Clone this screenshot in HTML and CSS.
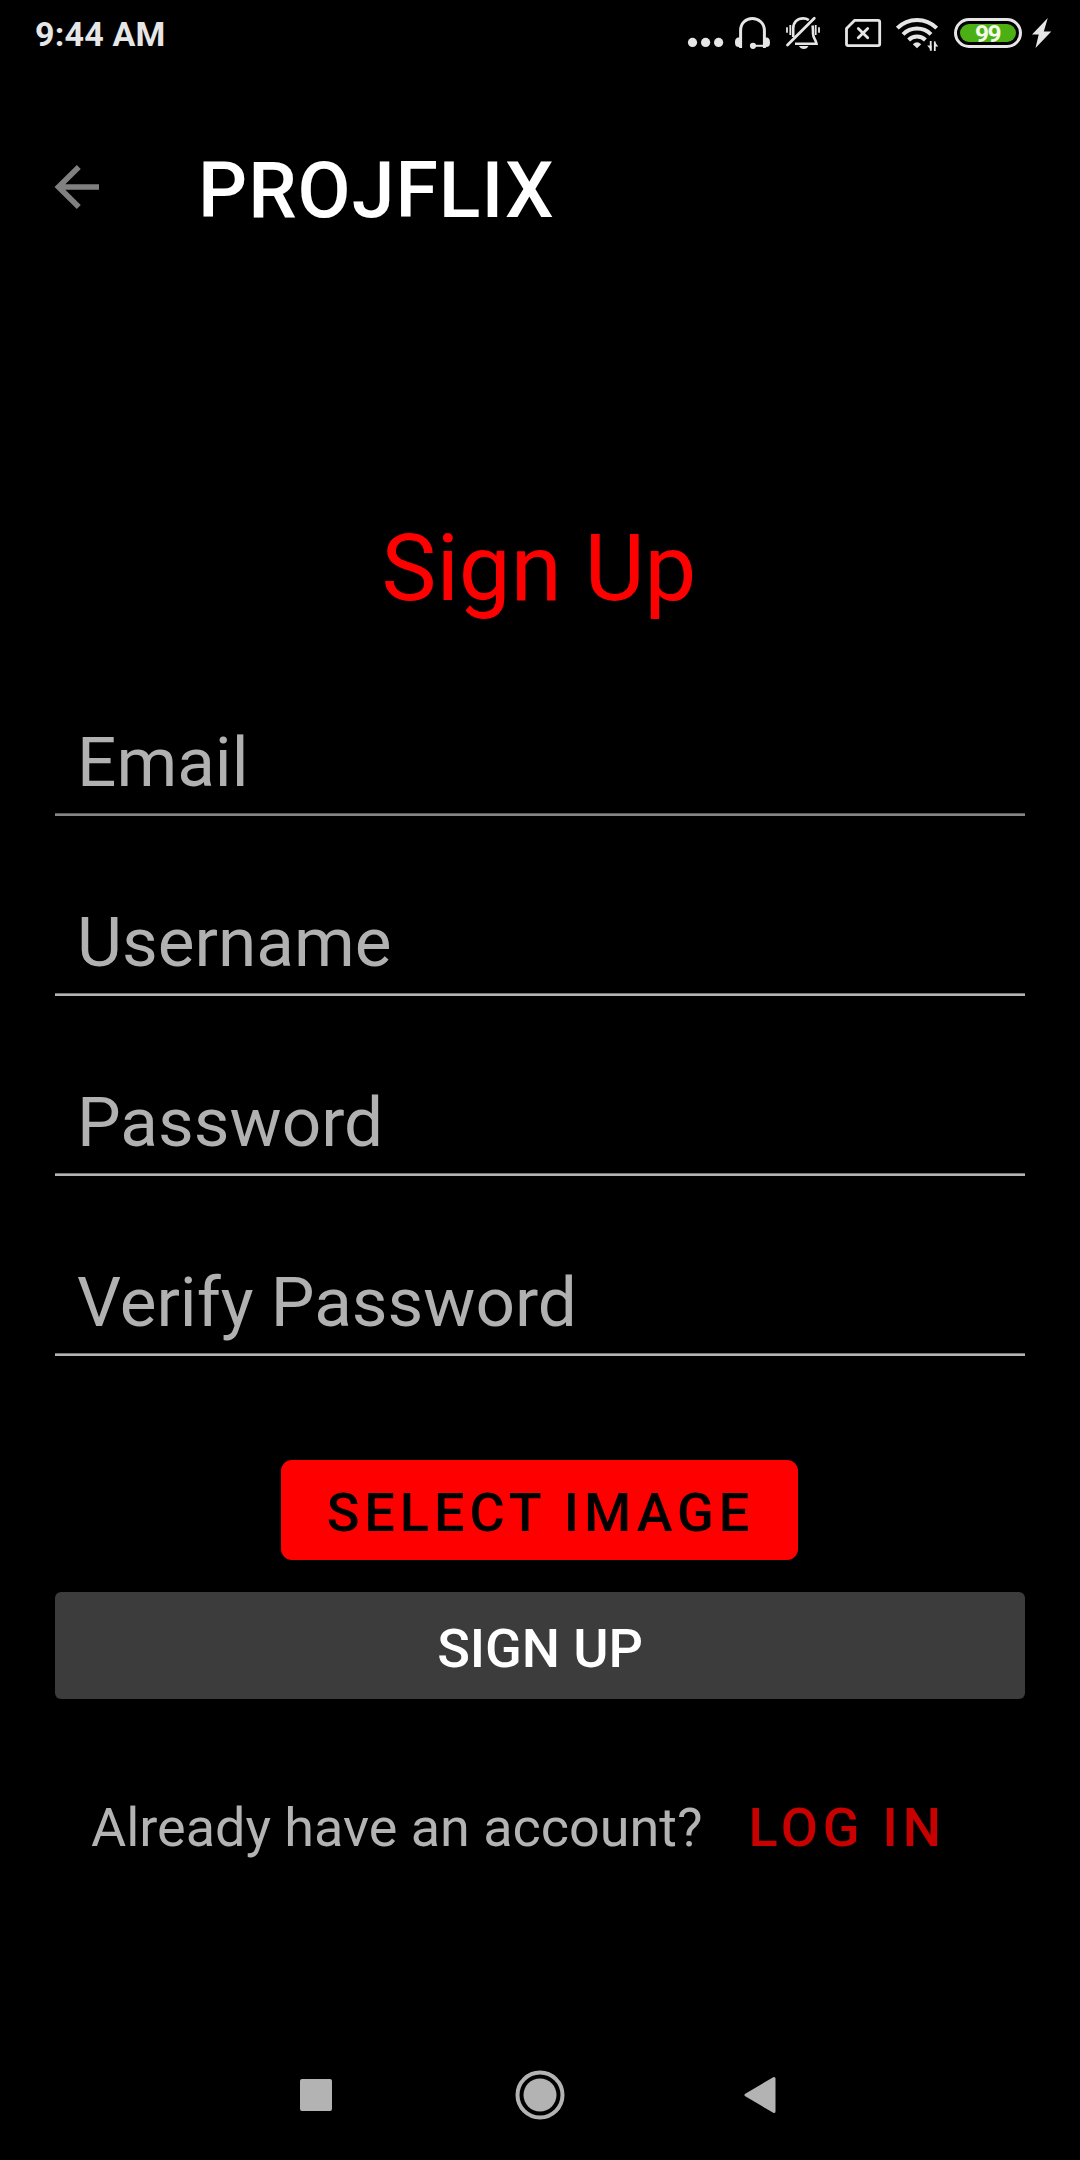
FILE: index.html
```html
<!DOCTYPE html>
<html lang="en">
<head>
<meta charset="utf-8">
<title>Projflix – Sign Up</title>
<link rel="stylesheet" href="styles.css">
</head>
<body>
<div class="screen">
  <div class="status">
    <span class="time">9:44 AM</span>
    <div class="status-icons">
      <svg class="dots" width="38" height="66" viewBox="687 0 38 66" fill="#e6e6e6"><circle cx="692.5" cy="42.4" r="4.6"/><circle cx="705.6" cy="42.4" r="4.6"/><circle cx="718.6" cy="42.4" r="4.6"/></svg>
      <svg width="38" height="66" viewBox="734 0 38 66" fill="none" stroke="#e6e6e6" stroke-width="3"><path d="M740.6 48V30.5C740.6 23 746 18.6 752.3 18.6S764.4 23 764.4 30.5V48"/><path d="M754 45.8H765" stroke-width="2"/><circle cx="753" cy="45.8" r="3.1" fill="#e6e6e6" stroke="none"/><path d="M740 37.5h-1c-3 0-4 2-4 5s1 4.500 4 4.500h1zM765 37.500h1c3 0 4 2 4 5s-1 4.500-4 4.500h-1z" fill="#e6e6e6" stroke="none"/></svg>
      <svg width="38" height="66" viewBox="784 0 38 66" fill="none" stroke="#e6e6e6" stroke-width="2.600"><path d="M787.500 45L814.300 18.300" stroke-width="2.800" stroke-linecap="round"/><path d="M793.200 37V28.500C793.200 22 797.500 18.400 803.200 18.400C805.500 18.400 807.200 19 808.800 20.100M812.500 25.500C813 27.500 813 30 813 33.500C813 38 816 40 816.500 43.700H795"/><path d="M799 46h9.500c-1 2-2.500 3-4.700 3s-3.800-1-4.800-3z" fill="#e6e6e6" stroke="none"/><path d="M787 27.300v5.400M790.300 25v10M815.700 25v10M819 27.300v5.400" stroke-width="1.800"/></svg>
      <svg class="nosim" width="38" height="66" viewBox="844 0 38 66" fill="none" stroke="#e6e6e6" stroke-width="2.800" stroke-linejoin="round"><path d="M854.500 20.400H878Q879.700 20.400 879.700 22V44Q879.700 45.600 878 45.600H848.200Q846.500 45.600 846.500 44V28.500z"/><path d="M858.300 28.500l9.400 9.200M867.700 28.500l-9.400 9.200" stroke-linecap="round"/></svg>
      <svg width="44" height="66" viewBox="895 0 44 66" fill="none" stroke="#e6e6e6" stroke-width="4"><path d="M897.300 28.200A27.800 27.800 0 0 1 936.700 28.200M903 34.400A19.800 19.800 0 0 1 931 34.400M908.600 40A11.800 11.800 0 0 1 925.400 40"/><path d="M912.800 44.300Q917 40 921.200 44.300L917 48.300z" fill="#e6e6e6" stroke="none"/><path d="M930.700 41v9.700M934.800 51V41.500" stroke-width="1.800"/><path d="M927.200 45.500h4.300v5.200zM934 41.300l4.300 5.200H934z" fill="#e6e6e6" stroke="none"/></svg>
      <div class="battery"><div class="level">99</div></div>
      <svg width="20" height="66" viewBox="1032 0 20 66" fill="#e6e6e6"><path d="M1047.800 18L1032 34.500H1038.700L1035.500 48L1051.300 31.500H1043.800z"/></svg>
    </div>
  </div>
  <header class="toolbar">
    <svg width="46" height="46" viewBox="54 164 46 46" fill="none" stroke="#808080" stroke-width="5.600"><path d="M78.800 167L58.500 187L78.800 207M58.500 187H99"/></svg>
    <h1>PROJFLIX</h1>
  </header>
  <main>
    <h2>Sign Up</h2>
    <form class="fields">
      <input class="field first" type="text" placeholder="Email">
      <input class="field" type="text" placeholder="Username">
      <input class="field" type="password" placeholder="Password">
      <input class="field" type="password" placeholder="Verify Password">
    </form>
    <button class="select">SELECT IMAGE</button>
    <button class="submit">SIGN UP</button>
    <div class="account"><span>Already have an account?</span><a class="login">LOG IN</a></div>
  </main>
  <nav class="navbar">
    <svg width="32" height="32" viewBox="0 0 32 32"><rect width="32" height="32" rx="2" fill="#b3b3b3"/></svg>
    <svg class="home" width="50" height="50" viewBox="0 0 50 50"><circle cx="25" cy="25" r="22.500" fill="none" stroke="#b3b3b3" stroke-width="4"/><circle cx="25" cy="25" r="16.500" fill="#b3b3b3"/></svg>
    <svg width="32" height="38" viewBox="0 0 32 38"><path d="M2 19L30 2.500V35.500z" fill="#b3b3b3" stroke="#b3b3b3" stroke-width="3" stroke-linejoin="round"/></svg>
  </nav>
</div>
</body>
</html>
```
FILE: styles.css
```css
* { box-sizing: border-box; }
body { margin: 0; background: #000; font-family: Roboto, sans-serif; }
svg { display: block; flex: none; }
h1, h2 { margin: 0; }
button { border: 0; font-family: inherit; }

.screen { width: 1080px; height: 2160px; background: #000; display: flex; flex-direction: column; }

.status { height: 68px; padding: 0 28px 0 35px; display: flex; justify-content: space-between; color: #e6e6e6; }
.time { font-size: 34px; font-weight: 700; line-height: 69px; letter-spacing: .2px; white-space: nowrap; }
.status-icons { display: flex; height: 66px; align-items: center; }
.dots { margin-right: 9px; }
.dots + svg { margin-right: 12px; }
.nosim { margin: 0 13px 0 22px; }
.battery { width: 68px; height: 30px; margin: 0 10px 0 15px; padding: 3px; border: 3px solid #e6e6e6; border-radius: 15px; }
.level { height: 18px; padding-right: 1px; border-radius: 9px; background: #4caf14; color: #f4fbe8; font-size: 24.5px; font-weight: 700; line-height: 19px; letter-spacing: -1.6px; text-align: center; }

.toolbar { height: 238px; padding-left: 54px; display: flex; align-items: center; }
h1 { padding: 8px 0 0 98px; color: #fff; font-size: 77px; font-weight: 500; line-height: 90px; letter-spacing: 1px; }

main { flex: 1; display: flex; flex-direction: column; align-items: center; padding: 209px 55px 0; }
h2 { padding-right: 2px; color: #f00; font-size: 92.4px; font-weight: 400; line-height: 108px; }

.fields { width: 100%; margin-top: 89px; display: flex; flex-direction: column; gap: 76px; }
.field { width: 100%; height: 104px; padding: 0 22px 1px; border: 0; border-bottom: 2px solid #b3b3b3; box-shadow: inset 0 -1px #777; background: none; font: 400 69.3px Roboto, sans-serif; outline: none; }
.field.first { border-bottom-color: #868686; box-shadow: inset 0 -1px #5c5c5c; }
.field::placeholder { color: #b1b1b1; opacity: 1; }

.select { width: 517px; height: 100px; margin: 104px 1px 0 0; padding: 4px 0 0 2px; border-radius: 11px; background: #f00; color: #000; font-size: 54px; font-weight: 500; letter-spacing: 4.95px; white-space: nowrap; }
.submit { width: 100%; height: 107px; margin-top: 32px; padding: 6px 0 0; border-radius: 6px; background: #3c3c3c; color: #fff; font-size: 54px; font-weight: 500; letter-spacing: -.1px; }

.account { width: 100%; margin-top: 97px; padding-left: 36px; display: flex; font-size: 54px; line-height: 63px; color: #b3b3b3; white-space: nowrap; letter-spacing: -.03px; }
.login { margin-left: 46px; color: #c80000; font-weight: 500; letter-spacing: 4.8px; }

.navbar { height: 130px; padding: 0 304px 0 300px; display: flex; align-items: center; justify-content: space-between; }
.home { margin-left: 4px; }
```
